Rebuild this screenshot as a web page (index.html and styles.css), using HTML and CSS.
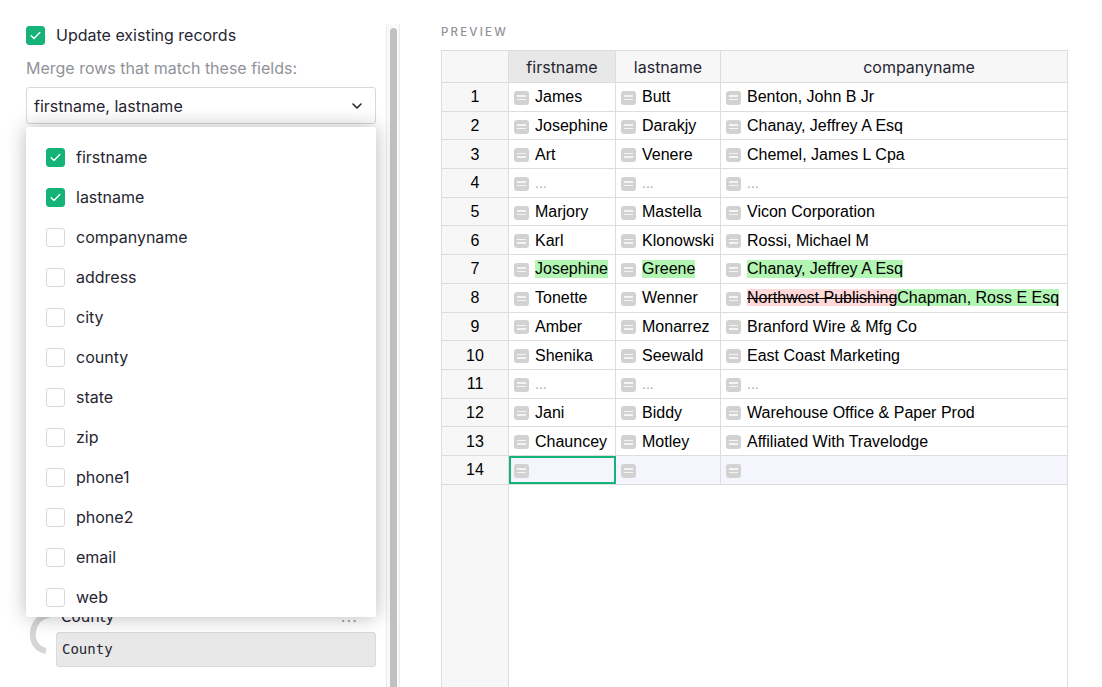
FILE: index.html
```html
<!DOCTYPE html>
<html>
<head>
<meta charset="utf-8">
<link rel="stylesheet" href="styles.css">
</head>
<body>
<div class="page">
  <div class="side">
    <div class="side-content">
      <div class="check-row">
        <span class="cb on"><svg viewBox="0 0 19 19" width="19" height="19"><path d="M5.2 9.8 L8 12.6 L13.8 6.6" fill="none" stroke="#fff" stroke-width="1.4" stroke-linecap="round" stroke-linejoin="round"/></svg></span>
        <span class="check-label">Update existing records</span>
      </div>
      <div class="merge-label">Merge rows that match these fields:</div>
      <div class="select">
        <span>firstname, lastname</span>
        <svg class="chev" viewBox="0 0 12 8" width="12" height="8"><path d="M2 2 L6 6 L10 2" fill="none" stroke="#262633" stroke-width="1.6" stroke-linecap="round" stroke-linejoin="round"/></svg>
      </div>
      <div class="mapping">
        <div class="arrow-col">
          <svg viewBox="0 0 30 50" width="30" height="50"><path d="M23 8 C4 10, 0 40, 20 44" fill="none" stroke="#d6d6d6" stroke-width="6"/></svg>
        </div>
        <div class="map-body">
          <div class="map-label"><span>County</span><span class="dots">...</span></div>
          <div class="map-input">County</div>
        </div>
      </div>
    </div>
    <div class="scrollbar"><div class="thumb"></div></div>
    <div class="menu">
      <div class="item"><span class="cb on"><svg viewBox="0 0 19 19" width="19" height="19"><path d="M5.2 9.8 L8 12.6 L13.8 6.6" fill="none" stroke="#fff" stroke-width="1.4" stroke-linecap="round" stroke-linejoin="round"/></svg></span><span>firstname</span></div>
      <div class="item"><span class="cb on"><svg viewBox="0 0 19 19" width="19" height="19"><path d="M5.2 9.8 L8 12.6 L13.8 6.6" fill="none" stroke="#fff" stroke-width="1.4" stroke-linecap="round" stroke-linejoin="round"/></svg></span><span>lastname</span></div>
      <div class="item"><span class="cb"></span><span>companyname</span></div>
      <div class="item"><span class="cb"></span><span>address</span></div>
      <div class="item"><span class="cb"></span><span>city</span></div>
      <div class="item"><span class="cb"></span><span>county</span></div>
      <div class="item"><span class="cb"></span><span>state</span></div>
      <div class="item"><span class="cb"></span><span>zip</span></div>
      <div class="item"><span class="cb"></span><span>phone1</span></div>
      <div class="item"><span class="cb"></span><span>phone2</span></div>
      <div class="item"><span class="cb"></span><span>email</span></div>
      <div class="item"><span class="cb"></span><span>web</span></div>
    </div>
  </div>
  <div class="main">
    <div class="preview-title">PREVIEW</div>
    <div class="grid">
      <div class="row head">
        <div class="c num"></div>
        <div class="c f1 sel">firstname</div>
        <div class="c f2">lastname</div>
        <div class="c f3 wide">companyname</div>
      </div>
      <div class="row"><div class="c num">1</div><div class="c f1"><i class="ic"></i><span>James</span></div><div class="c f2"><i class="ic"></i><span>Butt</span></div><div class="c f3"><i class="ic"></i><span>Benton, John B Jr</span></div></div>
      <div class="row"><div class="c num">2</div><div class="c f1"><i class="ic"></i><span>Josephine</span></div><div class="c f2"><i class="ic"></i><span>Darakjy</span></div><div class="c f3"><i class="ic"></i><span>Chanay, Jeffrey A Esq</span></div></div>
      <div class="row"><div class="c num">3</div><div class="c f1"><i class="ic"></i><span>Art</span></div><div class="c f2"><i class="ic"></i><span>Venere</span></div><div class="c f3"><i class="ic"></i><span>Chemel, James L Cpa</span></div></div>
      <div class="row"><div class="c num">4</div><div class="c f1"><i class="ic"></i><span class="ell">...</span></div><div class="c f2"><i class="ic"></i><span class="ell">...</span></div><div class="c f3"><i class="ic"></i><span class="ell">...</span></div></div>
      <div class="row"><div class="c num">5</div><div class="c f1"><i class="ic"></i><span>Marjory</span></div><div class="c f2"><i class="ic"></i><span>Mastella</span></div><div class="c f3"><i class="ic"></i><span>Vicon Corporation</span></div></div>
      <div class="row"><div class="c num">6</div><div class="c f1"><i class="ic"></i><span>Karl</span></div><div class="c f2"><i class="ic"></i><span>Klonowski</span></div><div class="c f3"><i class="ic"></i><span>Rossi, Michael M</span></div></div>
      <div class="row"><div class="c num">7</div><div class="c f1"><i class="ic"></i><span class="add">Josephine</span></div><div class="c f2"><i class="ic"></i><span class="add">Greene</span></div><div class="c f3"><i class="ic"></i><span class="add">Chanay, Jeffrey A Esq</span></div></div>
      <div class="row"><div class="c num">8</div><div class="c f1"><i class="ic"></i><span>Tonette</span></div><div class="c f2"><i class="ic"></i><span>Wenner</span></div><div class="c f3"><i class="ic"></i><span><span class="del">Northwest Publishing</span><span class="add">Chapman, Ross E Esq</span></span></div></div>
      <div class="row"><div class="c num">9</div><div class="c f1"><i class="ic"></i><span>Amber</span></div><div class="c f2"><i class="ic"></i><span>Monarrez</span></div><div class="c f3"><i class="ic"></i><span>Branford Wire &amp; Mfg Co</span></div></div>
      <div class="row"><div class="c num">10</div><div class="c f1"><i class="ic"></i><span>Shenika</span></div><div class="c f2"><i class="ic"></i><span>Seewald</span></div><div class="c f3"><i class="ic"></i><span>East Coast Marketing</span></div></div>
      <div class="row"><div class="c num">11</div><div class="c f1"><i class="ic"></i><span class="ell">...</span></div><div class="c f2"><i class="ic"></i><span class="ell">...</span></div><div class="c f3"><i class="ic"></i><span class="ell">...</span></div></div>
      <div class="row"><div class="c num">12</div><div class="c f1"><i class="ic"></i><span>Jani</span></div><div class="c f2"><i class="ic"></i><span>Biddy</span></div><div class="c f3"><i class="ic"></i><span>Warehouse Office &amp; Paper Prod</span></div></div>
      <div class="row"><div class="c num">13</div><div class="c f1"><i class="ic"></i><span>Chauncey</span></div><div class="c f2"><i class="ic"></i><span>Motley</span></div><div class="c f3"><i class="ic"></i><span>Affiliated With Travelodge</span></div></div>
      <div class="row new"><div class="c num">14</div><div class="c f1 cursor"><i class="ic"></i><span></span></div><div class="c f2"><i class="ic"></i><span></span></div><div class="c f3"><i class="ic"></i><span></span></div></div>
    </div>
  </div>
</div>
</body>
</html>
```

FILE: styles.css
```css
* { box-sizing: border-box; }
html, body { margin: 0; padding: 0; }
body {
  width: 1102px;
  height: 687px;
  overflow: hidden;
  background: #fff;
  font-family: Inter, "Noto Sans", sans-serif;
  color: #262633;
}
.page { display: flex; height: 687px; }

.side { position: relative; width: 400px; display: flex; flex: none; }
.side-content { width: 386px; padding: 26px 10px 0 26px; }

.cb {
  width: 19px; height: 19px; flex: none;
  border: 1px solid #d9d9d9; border-radius: 3px; background: #fff;
  display: inline-flex;
}
.cb.on { background: #16b378; border-color: #16b378; }
.cb svg { margin: -1px; }

.check-row { display: flex; align-items: center; gap: 11px; height: 19px; }
.check-label { font-size: 16px; line-height: 19px; }
.merge-label { margin-top: 13px; font-size: 16px; line-height: 20px; color: #929299; }
.select {
  margin-top: 9px; height: 37px; width: 350px;
  border: 1px solid #d9d9d9; border-radius: 3px;
  display: flex; align-items: center; justify-content: space-between;
  padding: 0 12px 0 7px; font-size: 16px;
}
.chev { margin-top: 1px; }

.mapping { margin-top: 481px; display: flex; width: 350px; }
.arrow-col { width: 30px; flex: none; padding-top: 2px; }
.map-body { flex: 1; }
.map-label { display: flex; justify-content: space-between; height: 27px; font-family: "DejaVu Sans", sans-serif; font-size: 15px; line-height: 24px; padding: 0 18px 0 5px; }
.dots { color: #929299; letter-spacing: 1px; }
.map-input {
  height: 35px; background: #e8e8e8; border: 1px solid #dadada; border-radius: 3px;
  font-family: "DejaVu Sans Mono", monospace; font-size: 14px; line-height: 33px; padding-left: 5px;
}

.scrollbar {
  width: 14px; flex: none; margin-top: 24px;
  background: #fafafa; border-left: 1px solid #ebebeb; border-right: 1px solid #ebebeb;
  padding: 4px 2px 0 3px;
}
.thumb { height: 100%; background: #c1c1c1; border-radius: 4px 4px 0 0; }

.menu {
  position: absolute; left: 26px; top: 127px; width: 350px; height: 490px;
  background: #fff; border-radius: 2px;
  box-shadow: 0 0 20px rgba(0,0,0,0.28);
  padding: 10px 0 0 20px; overflow: hidden;
}
.item { height: 40px; display: flex; align-items: center; gap: 11px; font-size: 16px; }

.main { flex: 1; padding: 25px 0 0 41px; }
.preview-title { font-size: 11.5px; line-height: 14px; letter-spacing: 2.2px; color: #929299; font-weight: 500; }
.grid {
  margin-top: 11px; width: 627px; height: 640px;
  border: 1px solid #dddddd; border-bottom: none;
  background: linear-gradient(to right, #f7f7f7 0 66px, #dddddd 66px 67px, #fff 67px);
}
.row { display: flex; height: 28.7px; border-bottom: 1px solid #dddddd; }
.row.head { height: 32px; background: #f7f7f7; }
.c {
  height: 100%; border-right: 1px solid #dddddd; display: flex; align-items: center;
  font-family: "Liberation Sans", Arial, sans-serif; font-size: 16px; color: #000;
  white-space: nowrap; overflow: hidden; position: relative;
}
.row:not(.head) .c { padding-top: 1px; }
.num { width: 67px; justify-content: center; background: #f7f7f7; }
.f1 { width: 107px; background: #fff; }
.f2 { width: 105px; background: #fff; }
.f3 { width: 346px; border-right: none; background: #fff; }
.head .c { justify-content: center; font-family: Inter, "Noto Sans", sans-serif; font-size: 16px; color: #262633; background: #f7f7f7; }
.head .c.sel { background: #e8e8e8; }
.head .c.wide { padding-left: 50px; }
.row:not(.head) .f1, .row:not(.head) .f2, .row:not(.head) .f3 { padding-left: 5px; gap: 6px; }
.new .f1, .new .f2, .new .f3 { background: #f5f5fe; }
.cursor { outline: 2px solid #16b378; outline-offset: -2px; }

.ic {
  width: 15px; height: 14px; flex: none; border-radius: 3px; background: #d2d2d2;
  position: relative; margin-top: 1px;
}
.ic::before, .ic::after {
  content: ""; position: absolute; left: 3px; right: 3px; height: 1.5px; background: #f4f4f4;
}
.ic::before { top: 4.5px; }
.ic::after { top: 8px; }
.ell { color: #aaa; font-size: 14px; }
.add { background: #b3f5b3; }
.del { background: #ffd9d9; text-decoration: line-through; }
```
